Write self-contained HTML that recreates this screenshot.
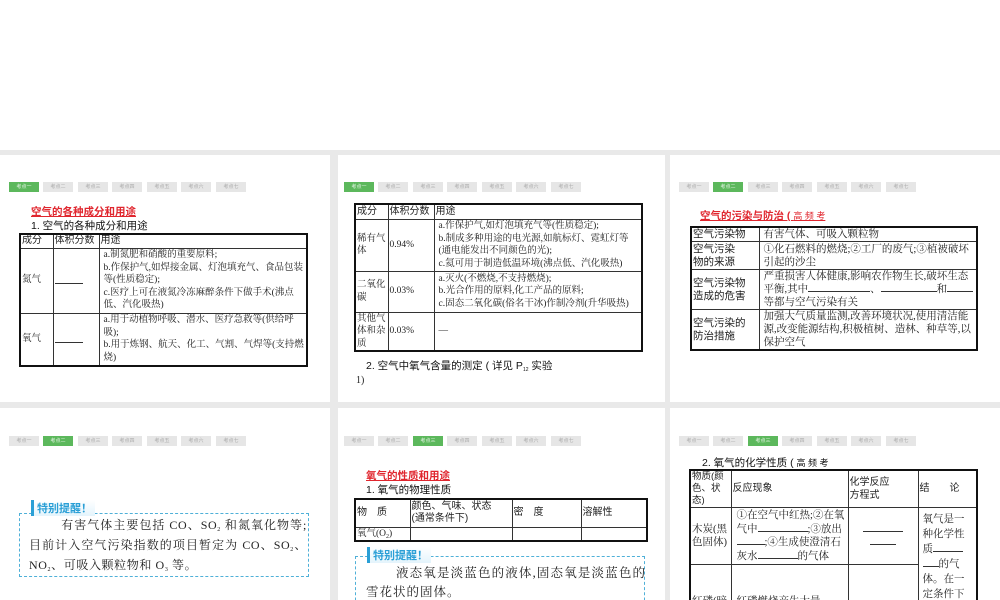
<!DOCTYPE html>
<html><head><meta charset="utf-8"><style>
*{margin:0;padding:0;box-sizing:border-box}
body{width:1000px;height:600px;background:#e9e9e9;position:relative;overflow:hidden;font-family:"Liberation Serif","Noto Serif CJK SC",serif;color:#222}
.top{position:absolute;left:0;top:0;width:1000px;height:150px;background:#fff}
.p{position:absolute;background:#fff;overflow:hidden}
.tab{position:absolute;top:0;width:30px;height:10px;background:#e6e6e6;color:#aaa;font:5px "Liberation Sans","Noto Sans CJK SC",sans-serif;text-align:center;line-height:10px}
.tab.on{background:#5cb85c;color:#eaf5ea}
.tabs{position:absolute;height:10px}
.a{position:absolute;white-space:nowrap}
.red{color:#e0262e;font:bold 10.5px "Liberation Sans","Noto Sans CJK SC",sans-serif;text-decoration:underline}
.h{font:10.5px "Liberation Sans","Noto Sans CJK SC",sans-serif;color:#111}
table{position:absolute;border-collapse:collapse;border:2px solid #111;font-size:9.5px;line-height:12.5px}
td{border:1px solid #333;vertical-align:middle;padding:0 1px}
.s{font-family:"Liberation Sans","Noto Sans CJK SC",sans-serif;font-size:10px}
.bl{display:inline-block;border-bottom:1px solid #333}
.box{position:absolute;border:1px dashed #4fb0d8}
.lab{position:absolute;color:#2a9fd6;font:bold 11px "Liberation Sans","Noto Sans CJK SC",sans-serif;border-left:3px solid #2a9fd6;padding:0 3px;background:linear-gradient(#fff,#e4f4fc)}
.bt{position:absolute;font-size:12px;line-height:20px;font-family:"Liberation Serif","Noto Serif CJK SC",serif;letter-spacing:0.6px;text-align:justify}
.sb{font-size:6px;vertical-align:-2px;line-height:0}
</style></head><body>
<div class="top"></div>

<!-- panel 1 -->
<div class="p" style="left:0;top:155px;width:330px;height:247px">
<div class="tabs" style="left:9px;top:27px">
<div class="tab on" style="left:0">考点一</div><div class="tab" style="left:34px">考点二</div><div class="tab" style="left:69px">考点三</div><div class="tab" style="left:103px">考点四</div><div class="tab" style="left:138px">考点五</div><div class="tab" style="left:172px">考点六</div><div class="tab" style="left:207px">考点七</div></div>
<div class="a red" style="left:31px;top:49px">空气的各种成分和用途</div>
<div class="a h" style="left:31px;top:63px">1. 空气的各种成分和用途</div>
<table style="left:19px;top:78px;width:289px;height:134px">
<tr style="height:14px"><td class="s" style="width:33px">成分</td><td class="s" style="width:46px">体积分数</td><td class="s">用途</td></tr>
<tr style="height:65px"><td>氮气</td><td><span class="bl" style="width:28px;margin-top:10px"></span></td><td style="padding-left:4px">a.制氮肥和硝酸的重要原料;<br>b.作保护气,如焊接金属、灯泡填充气、食品包装等(性质稳定);<br>c.医疗上可在液氮冷冻麻醉条件下做手术(沸点低、汽化吸热)</td></tr>
<tr><td>氧气</td><td><span class="bl" style="width:28px;margin-top:10px"></span></td><td style="padding-left:4px">a.用于动植物呼吸、潜水、医疗急救等(供给呼吸);<br>b.用于炼钢、航天、化工、气割、气焊等(支持燃烧)</td></tr>
</table>
</div>

<!-- panel 2 -->
<div class="p" style="left:338px;top:155px;width:327px;height:247px">
<div class="tabs" style="left:6px;top:27px">
<div class="tab on" style="left:0">考点一</div><div class="tab" style="left:34px">考点二</div><div class="tab" style="left:69px">考点三</div><div class="tab" style="left:103px">考点四</div><div class="tab" style="left:138px">考点五</div><div class="tab" style="left:172px">考点六</div><div class="tab" style="left:207px">考点七</div></div>
<table style="left:16px;top:48px;width:289px;height:148px">
<tr style="height:15px"><td class="s" style="width:33px">成分</td><td class="s" style="width:46px">体积分数</td><td class="s">用途</td></tr>
<tr style="height:52px"><td>稀有气体</td><td>0.94%</td><td style="padding-left:4px">a.作保护气,如灯泡填充气等(性质稳定);<br>b.制成多种用途的电光源,如航标灯、霓虹灯等(通电能发出不同颜色的光);<br>c.氦可用于制造低温环境(沸点低、汽化吸热)</td></tr>
<tr style="height:41px"><td>二氧化碳</td><td>0.03%</td><td style="padding-left:4px">a.灭火(不燃烧,不支持燃烧);<br>b.光合作用的原料,化工产品的原料;<br>c.固态二氧化碳(俗名干冰)作制冷剂(升华吸热)</td></tr>
<tr><td>其他气体和杂质</td><td>0.03%</td><td style="padding-left:4px">—</td></tr>
</table>
<div class="a h" style="left:28px;top:203px">2. 空气中氧气含量的测定 ( 详见 P<span class="sb" style="font-size:5px">12</span> 实验</div>
<div class="a" style="left:18px;top:220px;font-size:10px">1)</div>
</div>

<!-- panel 3 -->
<div class="p" style="left:670px;top:155px;width:330px;height:247px">
<div class="tabs" style="left:9px;top:27px">
<div class="tab" style="left:0">考点一</div><div class="tab on" style="left:34px">考点二</div><div class="tab" style="left:69px">考点三</div><div class="tab" style="left:103px">考点四</div><div class="tab" style="left:138px">考点五</div><div class="tab" style="left:172px">考点六</div><div class="tab" style="left:207px">考点七</div></div>
<div class="a red" style="left:30px;top:53px">空气的污染与防治 ( <span style="font-weight:normal;font-size:9px">高 频 考</span></div>
<table style="left:20px;top:71px;width:288px;height:123px;font-size:10.5px;line-height:13px">
<tr style="height:14px"><td class="s" style="width:68px;font-size:10.5px">空气污染物</td><td style="padding-left:4px">有害气体、可吸入颗粒物</td></tr>
<tr style="height:28px"><td class="s" style="font-size:10.5px">空气污染<br>物的来源</td><td style="padding-left:4px">①化石燃料的燃烧;②工厂的废气;③植被破坏引起的沙尘</td></tr>
<tr style="height:40px"><td class="s" style="font-size:10.5px">空气污染物<br>造成的危害</td><td style="padding-left:4px">严重损害人体健康,影响农作物生长,破坏生态平衡,其中<span class="bl" style="width:62px"></span>、<span class="bl" style="width:56px"></span>和<span class="bl" style="width:26px"></span>等都与空气污染有关</td></tr>
<tr><td class="s" style="font-size:10.5px">空气污染的<br>防治措施</td><td style="padding-left:4px">加强大气质量监测,改善环境状况,使用清洁能源,改变能源结构,积极植树、造林、种草等,以保护空气</td></tr>
</table>
</div>

<!-- panel 4 -->
<div class="p" style="left:0;top:408px;width:330px;height:192px">
<div class="tabs" style="left:9px;top:28px">
<div class="tab" style="left:0">考点一</div><div class="tab on" style="left:34px">考点二</div><div class="tab" style="left:69px">考点三</div><div class="tab" style="left:103px">考点四</div><div class="tab" style="left:138px">考点五</div><div class="tab" style="left:172px">考点六</div><div class="tab" style="left:207px">考点七</div></div>
<div class="box" style="left:19px;top:105px;width:290px;height:64px"></div>
<div class="lab" style="left:31px;top:92px">特别提醒！</div>
<div class="bt" style="left:29px;top:107px;width:278px">&nbsp;&nbsp;&nbsp;&nbsp;&nbsp;&nbsp;&nbsp;&nbsp;有害气体主要包括 CO、SO<span class="sb">2</span> 和氮氧化物等;目前计入空气污染指数的项目暂定为 CO、SO<span class="sb">2</span>、NO<span class="sb">2</span>、可吸入颗粒物和 O<span class="sb">3</span> 等。</div>
</div>

<!-- panel 5 -->
<div class="p" style="left:338px;top:408px;width:327px;height:192px">
<div class="tabs" style="left:6px;top:28px">
<div class="tab" style="left:0">考点一</div><div class="tab" style="left:34px">考点二</div><div class="tab on" style="left:69px">考点三</div><div class="tab" style="left:103px">考点四</div><div class="tab" style="left:138px">考点五</div><div class="tab" style="left:172px">考点六</div><div class="tab" style="left:207px">考点七</div></div>
<div class="a red" style="left:28px;top:60px">氧气的性质和用途</div>
<div class="a h" style="left:28px;top:74px">1. 氧气的物理性质</div>
<table style="left:16px;top:90px;width:294px;height:43px">
<tr style="height:28px"><td class="s" style="width:55px">物　质</td><td class="s" style="width:102px">颜色、气味、状态<br>(通常条件下)</td><td class="s" style="width:69px">密　度</td><td class="s">溶解性</td></tr>
<tr><td>氧气(O<span class="sb">2</span>)</td><td></td><td></td><td></td></tr>
</table>
<div class="box" style="left:17px;top:148px;width:290px;height:60px"></div>
<div class="lab" style="left:29px;top:139px">特别提醒！</div>
<div class="bt" style="left:28px;top:156px;width:280px;font-size:12.5px;line-height:19px;letter-spacing:1px">&nbsp;&nbsp;&nbsp;&nbsp;&nbsp;&nbsp;&nbsp;液态氧是淡蓝色的液体,固态氧是淡蓝色的雪花状的固体。</div>
</div>

<!-- panel 6 -->
<div class="p" style="left:670px;top:408px;width:330px;height:192px">
<div class="tabs" style="left:9px;top:28px">
<div class="tab" style="left:0">考点一</div><div class="tab" style="left:34px">考点二</div><div class="tab on" style="left:69px">考点三</div><div class="tab" style="left:103px">考点四</div><div class="tab" style="left:138px">考点五</div><div class="tab" style="left:172px">考点六</div><div class="tab" style="left:207px">考点七</div></div>
<div class="a h" style="left:32px;top:47px">2. 氧气的化学性质 ( <span style="font-size:9px">高 频 考</span></div>
<table style="left:19px;top:61px;width:289px;height:160px;font-size:10.5px;line-height:13.5px">
<tr style="height:28px"><td class="s" style="width:41px;font-size:9.5px;line-height:12px">物质(颜色、状态)</td><td class="s" style="width:117px">反应现象</td><td class="s" style="width:70px">化学反应<br>方程式</td><td class="s">结　　论</td></tr>
<tr style="height:57px"><td>木炭(黑色固体)</td><td style="padding-left:5px">①在空气中红热;②在氧气中<span class="bl" style="width:50px"></span>;③放出<span class="bl" style="width:28px"></span>;④生成使澄清石灰水<span class="bl" style="width:40px"></span>的气体</td><td style="text-align:center"><span class="bl" style="width:40px"></span><br><span class="bl" style="width:26px"></span></td><td rowspan="2" style="vertical-align:top;padding:4px 4px;line-height:15px">氧气是一种化学性质<span class="bl" style="width:30px"></span><span class="bl" style="width:16px"></span>的气体。在一定条件下与许多物质发生化学</td></tr>
<tr><td>红磷(暗红</td><td style="padding-left:5px">红磷燃烧产生大量<span class="bl" style="width:10px"></span><br>，放出大量的热</td><td style="text-align:center"><span class="bl" style="width:48px"></span></td></tr>
</table>
</div>
</body></html>
